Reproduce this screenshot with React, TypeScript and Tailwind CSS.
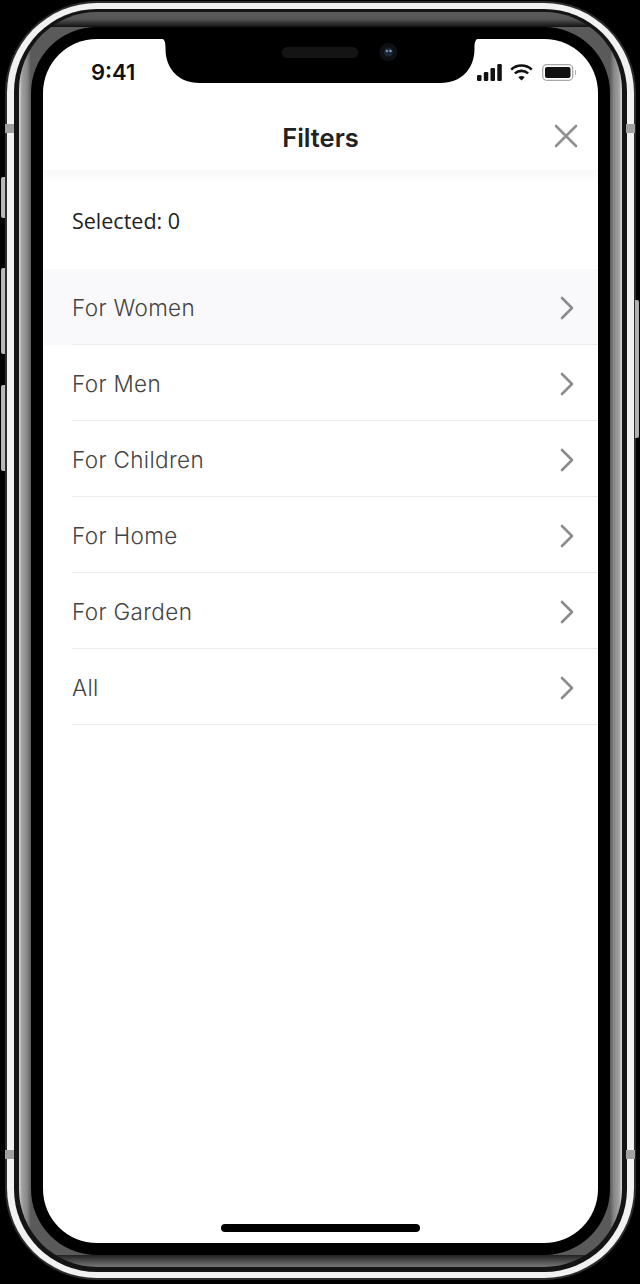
/** Filters sheet inside an iPhone X style frame. */

const rows = ["For Women", "For Men", "For Children", "For Home", "For Garden", "All"];

function Chevron() {
  return (
    <svg width="16" height="24" viewBox="0 0 16 24" fill="none" className="shrink-0">
      <path d="M3 2 L13 12 L3 22" stroke="#8c8c8c" strokeWidth="2.6" strokeLinecap="round" strokeLinejoin="round" />
    </svg>
  );
}

function Notch() {
  return (
    <svg width="314" height="45" viewBox="0 0 312 45" preserveAspectRatio="none" className="absolute left-[120px] top-0">
      <path d="M0 0 H312 C310 2 309.500 4 309.500 10 C309.500 30 296 44 276 44 H36 C16 44 2.500 30 2.500 10 C2.500 4 2 2 0 0 Z" fill="#000" />
      <rect x="118" y="8" width="76" height="11" rx="5.500" fill="#141414" />
      <circle cx="224" cy="13" r="9" fill="#0e1014" />
      <circle cx="224" cy="13" r="4.500" fill="#1b2636" />
      <circle cx="222.500" cy="12" r="1.300" fill="#6f87a8" />
      <circle cx="226" cy="12" r="1.300" fill="#8a9ab4" />
    </svg>
  );
}

function StatusIcons() {
  return (
    <div className="flex items-center gap-[8px]">
      <svg width="25" height="17" viewBox="0 0 25 17" fill="#111">
        <rect x="0" y="11" width="4.500" height="6" rx="1.200" />
        <rect x="6.800" y="8" width="4.500" height="9" rx="1.200" />
        <rect x="13.500" y="4" width="4.500" height="13" rx="1.200" />
        <rect x="20.300" y="0" width="4.500" height="17" rx="1.200" />
      </svg>
      <svg width="23" height="17" viewBox="0 0 23 17" fill="none" stroke="#111" strokeWidth="2.600">
        <path d="M1.200 5.600 C7 0.200 16 0.200 21.800 5.600" />
        <path d="M4.900 9.400 C8.700 6 14.300 6 18.100 9.400" />
        <path d="M11.500 16.500 L8.300 13.200 C10 11.600 13 11.600 14.700 13.200 Z" fill="#111" stroke="none" />
      </svg>
      <svg width="35" height="17" viewBox="0 0 35 17" fill="none" className="ml-[1px]">
        <rect x="0.700" y="0.700" width="30" height="15.600" rx="4" stroke="#a8a8a8" strokeWidth="1.300" />
        <rect x="3" y="3" width="25.500" height="11" rx="2" fill="#111" />
        <path d="M33 5.500 C34.500 6.200 34.500 10.800 33 11.500 Z" fill="#a8a8a8" />
      </svg>
    </div>
  );
}

export default function App() {
  return (
    <div className="relative h-[1284px] w-[640px] overflow-hidden bg-black pb-[4px] pl-[5px] pr-[4px] pt-[1px]">
      {/* side buttons */}
      <div className="absolute left-[1px] top-[177px] h-[41px] w-[4px] rounded-l-[2px] bg-[#b8b8b8]" />
      <div className="absolute left-[1px] top-[268px] h-[86px] w-[4px] rounded-l-[2px] bg-[#b8b8b8]" />
      <div className="absolute left-[1px] top-[385px] h-[86px] w-[4px] rounded-l-[2px] bg-[#b8b8b8]" />
      <div className="absolute right-[1px] top-[300px] h-[138px] w-[4px] rounded-r-[2px] bg-[#b0b0b0]" />

      <div className="h-full rounded-[92px] bg-[#2c2c2c] p-[2px]">
        <div className="h-full rounded-[90px] bg-[#f1f1f1] px-[7px] pb-[6px] pt-[6px]">
          <div className="h-full rounded-[83px] bg-[#141414] px-[5px] pb-[5px] pt-[3px]">
            <div className="h-full rounded-[78px] bg-[linear-gradient(180deg,#5c5c5c_0,#555_7px,#111_15px,transparent_15px,transparent_calc(100%-12px),#222_calc(100%-12px),#777_100%),linear-gradient(90deg,#d8d8d8_0,#a0a0a0_3px,#888_8px,#5a5a5a_12px,#5a5a5a_calc(100%-12px),#888_calc(100%-8px),#a0a0a0_calc(100%-3px),#d8d8d8_100%)] pb-[12px] pl-[12px] pr-[12px] pt-[15px]">
              <div className="h-full rounded-[66px] bg-black px-[12px] py-[12px]">
                <div className="relative flex h-full flex-col overflow-hidden rounded-[54px] bg-white">
                  <Notch />

                  <div className="flex h-[59px] shrink-0 items-start justify-between pl-[48px] pr-[21px]">
                    <span className="mt-[20px] font-['Inter',sans-serif] text-[22px] font-semibold leading-[26px] text-[#111]">9:41</span>
                    <div className="mt-[25px]">
                      <StatusIcons />
                    </div>
                  </div>

                  <div className="relative flex h-[72px] shrink-0 items-center justify-center pt-[8px]">
                    <span className="font-['Inter',sans-serif] text-[25.500px] font-semibold leading-none text-[#222]">Filters</span>
                    <svg width="24" height="24" viewBox="0 0 24 24" fill="none" className="absolute right-[20px] top-[26px]">
                      <path d="M2 2 L22 22 M22 2 L2 22" stroke="#8f8f8f" strokeWidth="2.600" strokeLinecap="round" />
                    </svg>
                  </div>

                  <div className="h-[12px] shrink-0 bg-gradient-to-b from-[#f8f8f8] to-white" />

                  <div className="flex h-[87px] shrink-0 items-center pb-[10px] pl-[29px]">
                    <span className="font-['Open_Sans',sans-serif] text-[21.500px] leading-none text-[#222]">Selected: 0</span>
                  </div>

                  {rows.map((label, i) => (
                    <div key={label} className={i === 0 ? "bg-[#f9f9fb] pl-[29px]" : "pl-[29px]"}>
                      <div className="flex h-[76px] items-center justify-between border-b border-[#ebebeb] pr-[23px] pt-[3px]">
                        <span className="font-['Inter',sans-serif] text-[22.500px] font-light tracking-[0.35px] text-[#444]">{label}</span>
                        <Chevron />
                      </div>
                    </div>
                  ))}

                  <div className="mb-[11px] mt-auto flex justify-center">
                    <div className="h-[8px] w-[199px] rounded-full bg-black" />
                  </div>
                </div>
              </div>
            </div>
          </div>
        </div>
      </div>

      {/* antenna bands */}
      <div className="absolute left-[5px] top-[124px] h-[9px] w-[9px] bg-[#a0a0a0]" />
      <div className="absolute left-[5px] top-[1150px] h-[9px] w-[9px] bg-[#a0a0a0]" />
      <div className="absolute right-[5px] top-[124px] h-[9px] w-[9px] bg-[#a0a0a0]" />
      <div className="absolute right-[5px] top-[1150px] h-[9px] w-[9px] bg-[#a0a0a0]" />
    </div>
  );
}
